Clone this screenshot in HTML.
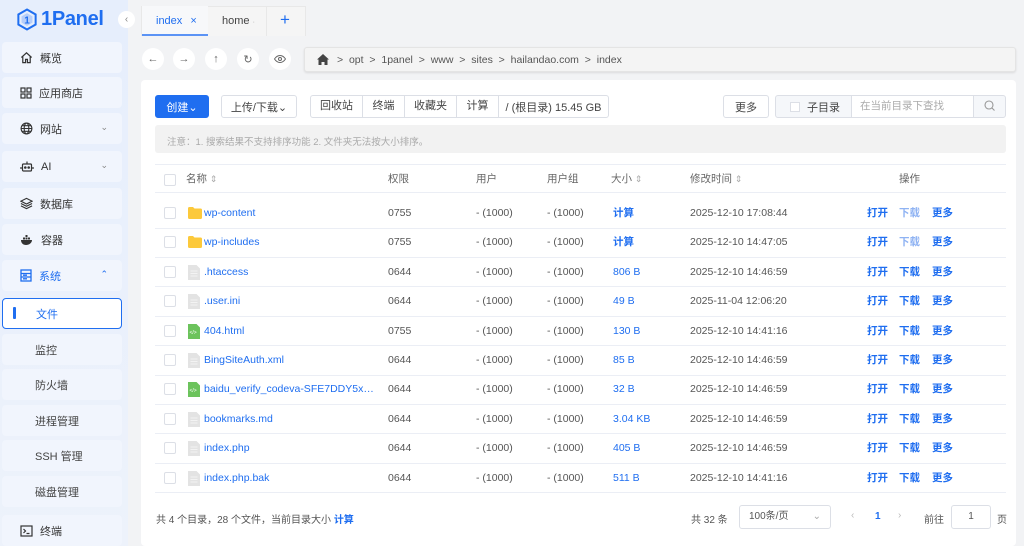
<!DOCTYPE html>
<html><head><meta charset="utf-8"><style>
*{box-sizing:border-box;margin:0;padding:0}
body{width:1024px;height:546px;overflow:hidden;background:#f2f3f5;font-family:"Liberation Sans","Noto Sans CJK SC",sans-serif;font-size:11px;color:#303133;position:relative}
.abs{position:absolute}
.side{left:0;top:0;width:128px;height:546px;background:linear-gradient(180deg,#e6eefc,#edf2fb)}
.mi{position:absolute;left:2px;width:120px;height:31px;background:#f1f5fd;border-radius:4px;display:flex;align-items:center;padding-left:18px;font-size:11px;color:#333}
.mi svg{margin-right:7px}
.mi .ch{position:absolute;right:14px;top:9px;font-size:9px;color:#888}
.sub{padding-left:33px;color:#444}
.nb{position:absolute;top:48px;width:22px;height:22px;border-radius:50%;background:#fff;display:flex;align-items:center;justify-content:center;color:#666;font-size:11px}
.card{left:141px;top:80px;width:875px;height:466px;background:#fff;border-radius:4px}
.btn{position:absolute;top:95px;height:23px;border:1px solid #dcdfe6;border-radius:3px;background:#fff;display:flex;align-items:center;justify-content:center;font-size:11px;color:#444}
.row{position:absolute;left:155px;width:851px;height:29.5px;border-bottom:1px solid #ebeef5}
.row span{position:absolute;top:0;line-height:29px;font-size:10.5px;color:#555}
.cb{position:absolute;left:9px;top:8px;width:12px;height:12px;border:1px solid #dcdfe6;border-radius:2px;background:#fff}
.bl{color:#1f6ef0!important}
.lb{color:#8fb3f3!important}
.fi{position:absolute;left:33px;top:7px;width:12px;height:15px}
</style></head><body>
<div class="abs side"></div>
<div class="abs" style="left:17px;top:8px;display:flex;align-items:center">
<svg width="20" height="23" viewBox="0 0 22 24"><path d="M11 1L20.5 6.5V17.5L11 23L1.5 17.5V6.5Z" fill="none" stroke="#1f6ef0" stroke-width="2.2"/><path d="M11 5L17 8.5V15.5L11 19L5 15.5V8.5Z" fill="#5b93f5" opacity=".35"/><text x="8" y="16.5" font-size="11" font-weight="bold" fill="#1f6ef0" font-family="Liberation Sans">1</text></svg>
<span style="font-size:20px;font-weight:bold;color:#1f6ef0;margin-left:4px;letter-spacing:-0.3px">1Panel</span></div>
<div class="abs" style="left:118px;top:11px;width:17px;height:17px;border-radius:50%;background:#fff;color:#888;font-size:10px;text-align:center;line-height:17px">‹</div>
<div class="mi" style="top:42px"><svg width="13" height="13" viewBox="0 0 14 14" fill="none" stroke="#333" stroke-width="1.3"><path d="M1.5 7L7 2l5.5 5M3 6v6.5h3V9h2v3.5h3V6"/></svg>概览</div>
<div class="mi" style="top:77px"><svg width="12" height="12" viewBox="0 0 12 12" fill="none" stroke="#333" stroke-width="1.2"><rect x="1" y="1" width="4" height="4"/><rect x="7" y="1" width="4" height="4"/><rect x="1" y="7" width="4" height="4"/><rect x="7" y="7" width="4" height="4"/></svg>应用商店</div>
<div class="mi" style="top:113px"><svg width="13" height="13" viewBox="0 0 14 14" fill="none" stroke="#333" stroke-width="1.2"><circle cx="7" cy="7" r="5.8"/><ellipse cx="7" cy="7" rx="2.5" ry="5.8"/><path d="M1.2 7h11.6M2 4h10M2 10h10"/></svg>网站<span class="ch">⌄</span></div>
<div class="mi" style="top:151px"><svg width="14" height="13" viewBox="0 0 14 13" fill="none" stroke="#333" stroke-width="1.2"><rect x="2.5" y="4" width="9" height="7" rx="1"/><path d="M7 1.5V4M1 7v2M13 7v2"/><circle cx="5.3" cy="7.5" r=".7" fill="#333"/><circle cx="8.7" cy="7.5" r=".7" fill="#333"/></svg>AI<span class="ch">⌄</span></div>
<div class="mi" style="top:188px"><svg width="13" height="13" viewBox="0 0 14 14" fill="none" stroke="#333" stroke-width="1.2"><path d="M7 1.5L13 4.5 7 7.5 1 4.5Z M1 7l6 3 6-3M1 9.5l6 3 6-3"/></svg>数据库</div>
<div class="mi" style="top:224px"><svg width="14" height="12" viewBox="0 0 14 12" fill="#333"><path d="M1 6h11c0 3-3 5-6 5S1 9 1 6z"/><rect x="3" y="3.5" width="2" height="2"/><rect x="5.5" y="3.5" width="2" height="2"/><rect x="5.5" y="1" width="2" height="2"/><rect x="8" y="3.5" width="2" height="2"/></svg>容器</div>
<div class="mi" style="top:260px;color:#1f6ef0"><svg width="12" height="13" viewBox="0 0 12 13" fill="none" stroke="#1f6ef0" stroke-width="1.3"><rect x="1" y="1" width="10" height="11"/><path d="M1 4.5h10M1 8h10M3 6.2h4M3 9.8h4"/></svg>系统<span class="ch" style="color:#1f6ef0">⌃</span></div>
<div class="mi" style="top:298px;background:#fff;border:1.5px solid #1f6ef0;color:#1f6ef0;padding-left:33px">文件<div style="position:absolute;left:10px;top:8px;width:3px;height:12px;background:#1f6ef0;border-radius:1px"></div></div>
<div class="mi sub" style="top:334px">监控</div>
<div class="mi sub" style="top:369px">防火墙</div>
<div class="mi sub" style="top:405px">进程管理</div>
<div class="mi sub" style="top:440px">SSH 管理</div>
<div class="mi sub" style="top:476px">磁盘管理</div>
<div class="mi" style="top:515px"><svg width="13" height="12" viewBox="0 0 13 12" fill="none" stroke="#333" stroke-width="1.2"><rect x="1" y="1" width="11" height="10"/><path d="M3.5 4l2 2-2 2M6.5 8.5h3"/></svg>终端</div>

<div class="abs" style="left:141px;top:6px;width:165px;height:30px;background:#f5f5f5;border:1px solid #e8e8e8;border-bottom:none"></div>
<div class="abs" style="left:142px;top:6px;width:66px;height:30px;background:#f7f8fa;border-bottom:2px solid #5b93f5;color:#1f6ef0;font-size:11px;padding:9px 0 0 14px">index <span style="margin-left:5px">×</span></div>
<div class="abs" style="left:222px;top:15px;font-size:11px;color:#444">home <span style="color:#aaa;font-size:7px">·</span></div>
<div class="abs" style="left:266px;top:6px;width:1px;height:30px;background:#e8e8e8"></div>
<div class="abs" style="left:280px;top:10px;color:#1f6ef0;font-size:17px">+</div>

<div class="nb" style="left:142px">←</div>
<div class="nb" style="left:173px">→</div>
<div class="nb" style="left:205px">↑</div>
<div class="nb" style="left:237px">↻</div>
<div class="nb" style="left:269px"><svg width="12" height="8" viewBox="0 0 12 8" fill="none" stroke="#666" stroke-width="1"><path d="M.5 4C2.5 1 4.5.5 6 .5S9.5 1 11.5 4C9.5 7 7.5 7.5 6 7.5S2.5 7 .5 4z"/><circle cx="6" cy="4" r="1.5"/></svg></div>
<div class="abs" style="left:304px;top:47px;width:712px;height:25px;background:#f4f4f4;border:1px solid #e4e4e4;border-radius:3px;box-shadow:0 1px 2px rgba(0,0,0,.1);font-size:10.5px;color:#555;padding:6px 0 0 12px;display:flex;align-items:flex-start">
<svg width="12" height="11" viewBox="0 0 12 11" fill="#444" style="margin-right:8px"><path d="M6 0L12 5.5H10.5V11H7.5V8h-3v3H1.5V5.5H0z"/></svg>&gt;&nbsp; opt &nbsp;&gt;&nbsp; 1panel &nbsp;&gt;&nbsp; www &nbsp;&gt;&nbsp; sites &nbsp;&gt;&nbsp; hailandao.com &nbsp;&gt;&nbsp; index</div>

<div class="abs card"></div>
<div class="btn" style="left:155px;width:54px;background:#1f6ef0;border-color:#1f6ef0;color:#fff">创建⌄</div>
<div class="btn" style="left:221px;width:76px">上传/下载⌄</div>
<div class="btn" style="left:310px;width:299px;justify-content:flex-start;padding:0">
<span style="width:52px;text-align:center;border-right:1px solid #dcdfe6;line-height:21px">回收站</span><span style="width:42px;text-align:center;border-right:1px solid #dcdfe6;line-height:21px">终端</span><span style="width:52px;text-align:center;border-right:1px solid #dcdfe6;line-height:21px">收藏夹</span><span style="width:42px;text-align:center;border-right:1px solid #dcdfe6;line-height:21px">计算</span><span style="flex:1;text-align:center">/ (根目录) 15.45 GB</span></div>
<div class="btn" style="left:723px;width:46px">更多</div>
<div class="btn" style="left:775px;width:231px;background:#f5f7fa;justify-content:flex-start;padding:0">
<span style="width:75px;display:flex;align-items:center;padding-left:14px;font-size:11px"><i style="display:inline-block;width:10px;height:10px;background:#fff;border:1px solid #dcdfe6;margin-right:7px"></i>子目录</span>
<span style="width:123px;height:21px;line-height:21px;background:#fff;border-left:1px solid #dcdfe6;border-right:1px solid #dcdfe6;color:#aaa;padding-left:8px;font-size:10.5px">在当前目录下查找</span>
<span style="flex:1;text-align:center;color:#999;line-height:10px"><svg width="11" height="11" viewBox="0 0 11 11" fill="none" stroke="#999" stroke-width="1.1"><circle cx="5" cy="5" r="4"/><path d="M8 8l2.5 2.5"/></svg></span></div>
<div class="abs" style="left:155px;top:125px;width:851px;height:28px;background:#f2f2f2;border-radius:3px;color:#aaa;font-size:9.5px;padding:9px 0 0 12px">注意：1. 搜索结果不支持排序功能 2. 文件夹无法按大小排序。</div>

<div class="row" style="top:164px;height:29px;border-top:1px solid #ebeef5">
<div class="cb" style="top:9px"></div>
<span style="left:31px;color:#666">名称 <small style="color:#aaa">⇕</small></span><span style="left:233px;color:#666">权限</span><span style="left:321px;color:#666">用户</span><span style="left:392px;color:#666">用户组</span><span style="left:456px;color:#666">大小 <small style="color:#aaa">⇕</small></span><span style="left:535px;color:#666">修改时间 <small style="color:#aaa">⇕</small></span><span style="left:744px;color:#666">操作</span></div>

<div id="rows"></div>
<script>
var d=[["wp-content","0755","计算","2025-12-10 17:08:44","d"],["wp-includes","0755","计算","2025-12-10 14:47:05","d"],[".htaccess","0644","806 B","2025-12-10 14:46:59","f"],[".user.ini","0644","49 B","2025-11-04 12:06:20","f"],["404.html","0755","130 B","2025-12-10 14:41:16","h"],["BingSiteAuth.xml","0644","85 B","2025-12-10 14:46:59","f"],["baidu_verify_codeva-SFE7DDY5x…","0644","32 B","2025-12-10 14:46:59","h"],["bookmarks.md","0644","3.04 KB","2025-12-10 14:46:59","f"],["index.php","0644","405 B","2025-12-10 14:46:59","f"],["index.php.bak","0644","511 B","2025-12-10 14:41:16","f"]];
var h="";d.forEach(function(r,i){var t=199+i*29.4;var ic;
if(r[4]=="d")ic='<svg class="fi" style="top:8px;width:14px;height:12px" viewBox="0 0 14 12"><path d="M0 1.5Q0 0 1.5 0H5l1.5 1.5h6Q14 1.5 14 3v7.5Q14 12 12.5 12h-11Q0 12 0 10.5z" fill="#fcc93b"/></svg>';
else if(r[4]=="h")ic='<svg class="fi" viewBox="0 0 12 15"><path d="M0 0h8.5L12 3.5V15H0z" fill="#6cc35c"/><text x="1.5" y="10" font-size="5" fill="#fff" font-family="Liberation Sans">&lt;/&gt;</text></svg>';
else ic='<svg class="fi" viewBox="0 0 12 15"><path d="M0 0h8.5L12 3.5V15H0z" fill="#e3e3e3"/><path d="M2.5 6h7M2.5 8.5h7M2.5 11h7" stroke="#f3f3f3" stroke-width=".9"/></svg>';
h+='<div class="row" style="top:'+t+'px"><div class="cb"></div>'+ic+'<span class="bl" style="left:49px">'+r[0]+'</span><span style="left:233px">'+r[1]+'</span><span style="left:321px">- (1000)</span><span style="left:392px">- (1000)</span><span class="bl" style="left:458px;'+(r[2]=="计算"?"font-weight:bold":"")+'">'+r[2]+'</span><span style="left:535px">'+r[3]+'</span><span class="bl" style="left:712px;font-weight:bold">打开</span><span class="'+(i<2?"lb":"bl")+'" style="left:744px;font-weight:bold">下载</span><span class="bl" style="left:777px;font-weight:bold">更多</span></div>';});
document.getElementById("rows").innerHTML=h;
</script>

<div class="abs" style="left:156px;top:511px;font-size:10px;color:#555">共 4 个目录，28 个文件，当前目录大小 <span style="color:#1f6ef0;font-weight:bold">计算</span></div>
<div class="abs" style="left:691px;top:511px;font-size:10px;color:#555">共 32 条</div>
<div class="abs" style="left:739px;top:505px;width:92px;height:24px;line-height:22px;border:1px solid #dcdfe6;border-radius:3px;font-size:10px;color:#555;padding-left:9px">100条/页<span style="position:absolute;right:9px;top:0;color:#aaa">⌄</span></div>
<div class="abs" style="left:851px;top:510px;color:#bbb;font-size:10px">‹</div>
<div class="abs" style="left:875px;top:511px;color:#1f6ef0;font-size:10px;font-weight:bold">1</div>
<div class="abs" style="left:898px;top:510px;color:#bbb;font-size:10px">›</div>
<div class="abs" style="left:924px;top:511px;font-size:10px;color:#555">前往</div>
<div class="abs" style="left:951px;top:505px;width:40px;height:24px;line-height:22px;border:1px solid #dcdfe6;border-radius:3px;font-size:10px;color:#555;text-align:center">1</div>
<div class="abs" style="left:997px;top:511px;font-size:10px;color:#555">页</div>
</body></html>
